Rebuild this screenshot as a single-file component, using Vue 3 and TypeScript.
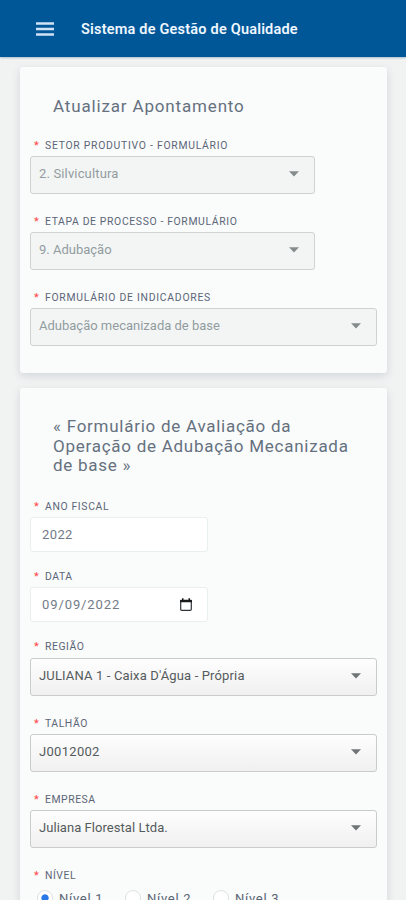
<script setup lang="ts">
interface Field {
  label: string
  value: string
  kind: 'select' | 'text' | 'date'
  size: 'short' | 'medium' | 'full'
  disabled?: boolean
  tone: string
}

const headerFields: Field[] = [
  { label: 'Setor Produtivo - Formulário', value: '2. Silvicultura', kind: 'select', size: 'medium', disabled: true, tone: 'setor' },
  { label: 'Etapa de Processo - Formulário', value: '9. Adubação', kind: 'select', size: 'medium', disabled: true, tone: 'etapa' },
  { label: 'Formulário de Indicadores', value: 'Adubação mecanizada de base', kind: 'select', size: 'full', disabled: true, tone: 'indicadores' },
]

const formFields: Field[] = [
  { label: 'Ano Fiscal', value: '2022', kind: 'text', size: 'short', tone: 'ano' },
  { label: 'Data', value: '09/09/2022', kind: 'date', size: 'short', tone: 'data' },
  { label: 'Região', value: "JULIANA 1 - Caixa D'Água - Própria", kind: 'select', size: 'full', tone: 'regiao' },
  { label: 'Talhão', value: 'J0012002', kind: 'select', size: 'full', tone: 'talhao' },
  { label: 'Empresa', value: 'Juliana Florestal Ltda.', kind: 'select', size: 'full', tone: 'empresa' },
]

const sections = [
  { id: 'apontamento', title: ['Atualizar Apontamento'], fields: headerFields },
  { id: 'avaliacao', title: ['« Formulário de Avaliação da', 'Operação de Adubação Mecanizada', 'de base »'], fields: formFields },
]

const levels = ['Nível 1', 'Nível 2', 'Nível 3']
</script>

<template>
  <div class="screen">
    <header class="topbar">
      <svg class="menu" viewBox="0 0 18 14" width="18" height="14">
        <path d="M0 1.5h18M0 7h18M0 12.5h18" />
      </svg>
      <span class="brand">Sistema de Gestão de Qualidade</span>
    </header>
    <main class="content">
      <section v-for="s in sections" :key="s.id" class="card" :class="s.id">
        <h2 class="title">
          <span v-for="line in s.title" :key="line" class="line">{{ line }}</span>
        </h2>
        <div v-for="f in s.fields" :key="f.label" class="field" :class="[f.kind, f.tone]">
          <div class="label"><span class="star">*</span><span class="name">{{ f.label }}</span></div>
          <div class="control" :class="[f.size, { disabled: f.disabled }]">
            <span class="value">{{ f.value }}</span>
            <svg v-if="f.kind === 'select'" class="caret" viewBox="0 0 10 6" width="10" height="6">
              <path d="M0 0.3h10L5 5.6z" />
            </svg>
            <svg v-if="f.kind === 'date'" class="calendar" viewBox="0 0 12 13" width="12" height="13">
              <path class="frame" d="M1.7 2.5h8.6q1 0 1 1v7.8q0 1-1 1H1.7q-1 0-1-1V3.500q0-1 1-1z" />
              <path d="M1 1.700h1V0.300h1.500v1.400h5V0.300H10v1.400h1q1 0 1 1V4.200H0V2.700q0-1 1-1z" />
            </svg>
          </div>
        </div>
        <div v-if="s.id === 'avaliacao'" class="field nivel">
          <div class="label"><span class="star">*</span><span class="name">Nível</span></div>
          <div class="radios">
            <label v-for="(l, i) in levels" :key="l" class="radio">
              <span class="dot" :class="{ on: i === 0 }"></span><span>{{ l }}</span>
            </label>
          </div>
        </div>
      </section>
    </main>
  </div>
</template>

<style>
body { background: #f1f3f3; }
</style>

<style scoped>
.screen {
  height: 900px;
  overflow: hidden;
  background: #f1f3f3;
  font-family: Roboto, "Noto Sans", sans-serif;
}
.topbar {
  height: 57px;
  box-sizing: border-box;
  display: flex;
  align-items: center;
  padding: 1px 36px 0;
  background: #005798;
  box-shadow: 0 1px 2px #a9bcd0;
}
.menu { stroke: #cfe2f6; stroke-width: 2.6; fill: none; }
.brand {
  margin-left: 27px;
  color: #eef6ff;
  font-size: 14.5px;
  font-weight: 600;
  white-space: nowrap;
  letter-spacing: 0.2px;
}
.content {
  display: flex;
  flex-direction: column;
  gap: 15px;
  padding: 10px 19px 0 20px;
}
.card {
  box-sizing: border-box;
  padding: 0 10px;
  background: #fafbfb;
  border-radius: 3px;
  box-shadow: 0 3px 8px rgba(60, 80, 85, 0.17);
}
.apontamento { height: 306px; padding-top: 29px; }
.avaliacao { height: 560px; padding-top: 29px; }
.title {
  margin: 0 0 21px;
  padding-left: 23px;
  color: #65717f;
  font-size: 17px;
  font-weight: 400;
  line-height: 20px;
  letter-spacing: 0.84px;
}
.avaliacao .title { line-height: 19.67px; margin-bottom: 22px; letter-spacing: 0.74px; }
.line { display: block; white-space: nowrap; }
.field { margin-bottom: 19px; }
.text { margin-bottom: 16px; }
.date { margin-bottom: 16px; }
.label {
  display: flex;
  height: 16px;
  margin-bottom: 3px;
  padding-left: 4px;
  line-height: 17px;
  font-size: 10.4px;
  color: #5a6677;
}
.regiao .label { margin-bottom: 4px; }
.star { width: 11px; color: #ff4343; font-size: 11px; }
.name { text-transform: uppercase; white-space: nowrap; letter-spacing: 0.55px; }
.setor .name, .indicadores .name { letter-spacing: 0.73px; }
.etapa .name, .ano .name { letter-spacing: 0.64px; }
.control {
  box-sizing: border-box;
  display: flex;
  align-items: center;
  justify-content: space-between;
  height: 38px;
  padding: 0 15px 3px 8px;
  border: 1px solid #c9cccc;
  border-radius: 3px;
  background: linear-gradient(#fefefe, #f0f0f0);
  color: #555b5d;
  font-size: 13px;
}
.control.disabled { background: #f3f5f5; border-color: #ced3d2; color: #929c9f; }
.full { width: 347px; }
.medium { width: 285px; }
.short {
  width: 178px;
  height: 35px;
  padding: 0 15px 0 11px;
  border-color: #e9eeee;
  background: #fff;
  color: #727b87;
}
.value { white-space: nowrap; }
.setor .value, .regiao .value { letter-spacing: 0.15px; }
.talhao .value { letter-spacing: 0.3px; }
.ano .value { letter-spacing: 0.4px; }
.data .value { letter-spacing: 0.9px; }
.empresa .value { letter-spacing: 0.05px; }
.caret { fill: #6f7474; margin-top: 1px; }
.disabled .caret { fill: #858c8b; }
.calendar { fill: #17191b; }
.calendar .frame { fill: none; stroke: #303438; stroke-width: 1.2; }
.radios { display: flex; padding: 3px 0 0 7px; }
.radio {
  display: flex;
  align-items: center;
  width: 88px;
  height: 18px;
  font-size: 13px;
  color: #596575;
  letter-spacing: 0.7px;
}
.dot {
  box-sizing: border-box;
  width: 16px;
  height: 16px;
  margin-right: 6px;
  border: 1px solid #dde2e4;
  border-radius: 50%;
  background: #fff;
}
.dot.on { background: radial-gradient(circle, #2878e8 0 3.300px, #fff 4px); }
</style>
